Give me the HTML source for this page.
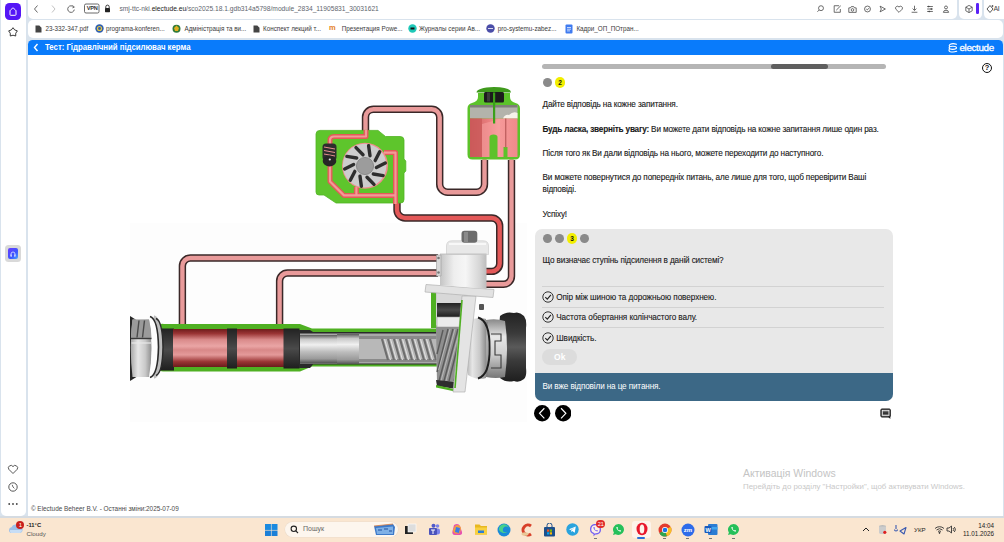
<!DOCTYPE html>
<html><head><meta charset="utf-8">
<style>
*{margin:0;padding:0;box-sizing:border-box}
html,body{width:1004px;height:542px;overflow:hidden;background:#d9e3ed;font-family:"Liberation Sans",sans-serif;position:relative}
.a{position:absolute}
.t{position:absolute;white-space:nowrap;font-family:"Liberation Sans",sans-serif}
</style></head><body>
<!-- sidebar -->
<div class="a" style="left:1px;top:0;width:24.5px;height:516px;background:#fff;border-radius:0 0 5px 5px"></div>
<div class="a" style="left:5px;top:3px;width:16px;height:17px;background:#5516f6;border-radius:4.5px"></div>
<!-- address bar -->
<div class="a" style="left:28px;top:0;width:929px;height:18.5px;background:#fff;border-radius:0 0 5px 5px"></div>
<div class="a" style="left:959px;top:0;width:23px;height:18.5px;background:#fff;border-radius:0 0 5px 5px"></div>
<div class="a" style="left:984px;top:0;width:20px;height:18.5px;background:#fff;border-radius:0 0 0 5px"></div>
<!-- bookmarks -->
<div class="a" style="left:28px;top:20px;width:975px;height:17.5px;background:#fff;border-radius:5px"></div>
<!-- content -->
<div class="a" style="left:28px;top:39.5px;width:975px;height:476.5px;background:#fff;border-radius:5px 5px 0 0"></div>
<div class="a" style="left:28px;top:39.7px;width:975px;height:15.8px;background:#097bfb;border-radius:4.5px 4.5px 0 0"></div>


<!-- chrome: sidebar icons -->
<svg class="a" style="left:5px;top:3px" width="16" height="17" viewBox="0 0 16 17"><path d="M5 11.6 V8 Q5 7.4 5.5 7 L7.4 5.3 Q8 4.8 8.6 5.3 L10.5 7 Q11 7.4 11 8 V11.6 Q11 12.3 10.3 12.3 H5.7 Q5 12.3 5 11.6 Z" fill="none" stroke="#fff" stroke-width="1" stroke-linejoin="round"/></svg>
<svg class="a" style="left:7px;top:26px" width="12" height="12" viewBox="0 0 12 12"><path d="M6.00 1.70 L7.70 3.95 L10.37 4.88 L8.76 7.20 L8.70 10.02 L6.00 9.20 L3.30 10.02 L3.24 7.20 L1.63 4.88 L4.30 3.95 Z" fill="none" stroke="#3a3a3a" stroke-width="1" stroke-linejoin="round"/></svg>
<div class="a" style="left:5px;top:245px;width:16px;height:16.5px;background:#d9d9d9;border-radius:3.5px"></div>
<div class="a" style="left:7.8px;top:247.7px;width:10.5px;height:11px;background:linear-gradient(135deg,#6a3cff,#3b55ff 60%,#4aa8ff);border-radius:2px"></div>
<svg class="a" style="left:8px;top:248.5px" width="10" height="9.5" viewBox="0 0 10 9.5"><path d="M3 7 V5 A2 2 0 0 1 7 5 V7" fill="none" stroke="#cfd8ff" stroke-width="0.9"/><rect x="2.5" y="5.5" width="1.3" height="2.3" fill="#cfd8ff"/><rect x="6.2" y="5.5" width="1.3" height="2.3" fill="#cfd8ff"/></svg>
<svg class="a" style="left:7px;top:464px" width="12" height="11" viewBox="0 0 12 11"><path d="M6 9.5 L1.8 5.3 A2.3 2.3 0 0 1 6 2.6 A2.3 2.3 0 0 1 10.2 5.3 Z" fill="none" stroke="#444" stroke-width="0.9" stroke-linejoin="round"/></svg>
<svg class="a" style="left:7px;top:481px" width="12" height="12" viewBox="0 0 12 12"><circle cx="6" cy="6" r="4.2" fill="none" stroke="#444" stroke-width="0.9"/><path d="M5.2 3.8 L6 6 L7.4 7.4" fill="none" stroke="#444" stroke-width="0.8"/></svg>
<svg class="a" style="left:7px;top:502px" width="12" height="4" viewBox="0 0 12 4"><circle cx="2.2" cy="2" r="0.9" fill="#444"/><circle cx="6" cy="2" r="0.9" fill="#444"/><circle cx="9.8" cy="2" r="0.9" fill="#444"/></svg>
<!-- chrome: nav -->
<svg class="a" style="left:30px;top:3px" width="80" height="12" viewBox="0 0 80 12"><path d="M7.5 2.5 L4.5 6 L7.5 9.5" fill="none" stroke="#555" stroke-width="0.9"/><path d="M22 2.5 L25 6 L22 9.5" fill="none" stroke="#bbb" stroke-width="0.9"/><path d="M43.6 4 A3.3 3.3 0 1 0 44.3 6.6" fill="none" stroke="#555" stroke-width="0.9"/><path d="M42.6 2.4 L44.4 4.2 L42.4 4.9" fill="none" stroke="#555" stroke-width="0.8"/><rect x="54.5" y="1" width="14.5" height="9" rx="1.5" fill="none" stroke="#444" stroke-width="0.8"/></svg>
<div class="t" style="left:85px;top:4.8px;width:14.5px;text-align:center;font-size:5.6px;font-weight:bold;line-height:6px;color:#333;letter-spacing:-0.2px">VPN</div>
<svg class="a" style="left:104px;top:4px" width="7" height="9" viewBox="0 0 7 9"><path d="M1.8 4 V2.8 A1.7 1.7 0 0 1 5.2 2.8 V4" fill="none" stroke="#222" stroke-width="0.9"/><rect x="1" y="4" width="5" height="4.2" rx="0.6" fill="#222"/></svg>
<div class="t" style="left:119.5px;top:4.5px;font-size:6.67px;line-height:8px;color:#60656d">smj-ttc-nki.<span style="color:#222">electude.eu</span>/sco2025.18.1.gdb314a5798/module_2834_11905831_30031621</div>

<!-- chrome: right icons -->
<svg class="a" style="left:812px;top:1.5px" width="140" height="14" viewBox="0 0 140 14" fill="none" stroke="#444" stroke-width="0.95"><g transform="translate(9 7) scale(0.82) translate(-9 -7)"><circle cx="9" cy="6" r="3"/><path d="M6.8 8.2 L4.6 10.4"/></g><g transform="translate(25.3 7) scale(0.82) translate(-25.3 -7)"><path d="M27.5 3 H21.5 V11 H29 V7"/><path d="M24 8.5 L29.5 3"/></g><g transform="translate(40.5 7.5) scale(0.82) translate(-40.5 -7.5)"><path d="M36 11 V5.5 H38 L39 4 H42 L43 5.5 H45 V11 Z"/><circle cx="40.5" cy="8" r="1.6"/></g><g transform="translate(55.5 7) scale(0.82) translate(-55.5 -7)"><circle cx="55.5" cy="7" r="3.6"/><path d="M54 7 L55.2 8.2 L57.2 6"/></g><g transform="translate(70.7 7) scale(0.82) translate(-70.7 -7)"><path d="M67.5 3.5 L74 7 L67.5 10.5 L69 7 Z" stroke-linejoin="round"/></g><g transform="translate(87 7.5) scale(0.82) translate(-87 -7.5)"><path d="M87 11 L83.2 7.2 A2.2 2.2 0 0 1 87 4.5 A2.2 2.2 0 0 1 90.8 7.2 Z" stroke-linejoin="round"/></g><g transform="translate(102.5 7) scale(0.82) translate(-102.5 -7)"><path d="M102.5 3 V8.5 M100.2 6.5 L102.5 8.8 L104.8 6.5 M99 11 H106"/></g><g transform="translate(118 7) scale(0.82) translate(-118 -7)"><path d="M114.5 4 H121.5 M114.5 7 H121.5 M114.5 10 H121.5"/><circle cx="116.5" cy="4" r="0.6" fill="#444"/><circle cx="119.5" cy="7" r="0.6" fill="#444"/><circle cx="117" cy="10" r="0.6" fill="#444"/></g><g transform="translate(134 7.5) scale(0.82) translate(-134 -7.5)"><circle cx="134" cy="5" r="1.8"/><path d="M130.8 11 A3.2 2.6 0 0 1 137.2 11 Z"/></g></svg>
<svg class="a" style="left:962.5px;top:3px" width="12" height="12" viewBox="0 0 12 12" fill="none" stroke="#444" stroke-width="0.95"><g transform="translate(6 6) scale(0.8) translate(-6 -6)"><path d="M6 1.5 L10 3.7 V8.3 L6 10.5 L2 8.3 V3.7 Z M2 3.7 L6 6 L10 3.7 M6 6 V10.5" stroke-linejoin="round"/></g></svg>
<div class="a" style="left:976.3px;top:3px;width:2.5px;height:11px;background:#5a22f6;border-radius:1.2px"></div>
<svg class="a" style="left:985px;top:3px" width="10" height="12" viewBox="0 0 10 12" fill="none" stroke="#444" stroke-width="0.9"><path d="M5 2.5 L8 6 L5 9.5 L2 6 Z" stroke-linejoin="round"/><path d="M7.5 2 V4 M6.5 3 H8.5" stroke-width="0.7"/></svg>
<div class="t" style="left:993.5px;top:4.5px;font-size:7px;line-height:8px;color:#444;letter-spacing:-0.3px">AI</div>
<!-- bookmarks -->
<div class="a" style="left:28px;top:24px;font-size:6.3px;line-height:8px;color:#3a3a3a;white-space:nowrap">
 <svg class="a" style="left:6.5px;top:0.5px" width="7" height="8" viewBox="0 0 7 8"><path d="M0.5 0.5 H4.3 L6.5 2.7 V7.5 H0.5 Z" fill="#444"/></svg>
 <div class="a" style="left:17.5px;top:1px">23-332-347.pdf</div>
 <svg class="a" style="left:66.5px;top:0px" width="9" height="9" viewBox="0 0 9 9"><circle cx="4.5" cy="4.5" r="4.2" fill="#2f5fb0"/><circle cx="4.5" cy="4.5" r="2.6" fill="#e8c840"/><circle cx="4.5" cy="4.5" r="1.4" fill="#2f5fb0"/></svg>
 <div class="a" style="left:78px;top:1px">programa-konferen...</div>
 <svg class="a" style="left:144px;top:0px" width="9" height="9" viewBox="0 0 9 9"><circle cx="4.5" cy="4.8" r="4" fill="#2f7a3a"/><path d="M2 4 L4.5 1.5 L7 4 L6 7 H3 Z" fill="#e0b020"/></svg>
 <div class="a" style="left:156.5px;top:1px">Адміністрація та ви...</div>
 <svg class="a" style="left:224.5px;top:0.5px" width="7" height="8" viewBox="0 0 7 8"><path d="M0.5 0.5 H4.3 L6.5 2.7 V7.5 H0.5 Z" fill="#444"/></svg>
 <div class="a" style="left:235px;top:1px">Конспект лекций т...</div>
 <div class="a" style="left:301px;top:-0.5px;font-size:7.5px;font-weight:bold;color:#e3801e;letter-spacing:-0.6px">m</div>
 <div class="a" style="left:313.7px;top:1px">Презентация Powe...</div>
 <svg class="a" style="left:380px;top:0px" width="9" height="9" viewBox="0 0 9 9"><circle cx="4.5" cy="4.5" r="4.2" fill="#1ec8b8"/><rect x="2.5" y="3.5" width="4" height="2" fill="#111"/></svg>
 <div class="a" style="left:391px;top:1px">Журналы серии Ав...</div>
 <svg class="a" style="left:458px;top:0px" width="9" height="9" viewBox="0 0 9 9"><circle cx="4.5" cy="4.5" r="4.2" fill="#4b4ea8"/><path d="M2 4.5 H7" stroke="#fff" stroke-width="0.8"/></svg>
 <div class="a" style="left:469.7px;top:1px">pro-systemu-zabez...</div>
 <svg class="a" style="left:537px;top:-0.5px" width="8" height="10" viewBox="0 0 8 10"><rect x="0.5" y="0.5" width="7" height="9" rx="1" fill="#3f7bf0"/><path d="M2 3.5 H6 M2 5.2 H6 M2 6.9 H5" stroke="#fff" stroke-width="0.7"/></svg>
 <div class="a" style="left:548.4px;top:1px">Кадри_ОП_ПОтран...</div>
</div>
<!-- header -->
<svg class="a" style="left:33px;top:43px" width="6" height="9" viewBox="0 0 6 9"><path d="M4.5 1 L1.5 4.5 L4.5 8" fill="none" stroke="#fff" stroke-width="1.4"/></svg>
<div class="t" style="left:44.8px;top:42.3px;font-size:8.5px;font-weight:bold;color:#fff;line-height:10px;transform:scaleX(0.925);transform-origin:0 0;letter-spacing:-0.05px">Тест: Гідравлічний підсилювач керма</div>
<div class="t" style="left:959.5px;top:42px;font-size:9.8px;color:#fff;line-height:11px;letter-spacing:-0.35px;-webkit-text-stroke:0.3px #fff">electude</div>
<svg class="a" style="left:947px;top:42px" width="12" height="12" viewBox="947 42 12 12" fill="none" stroke="#fff" stroke-width="1.1" stroke-linecap="round"><path d="M956.5 44.3 Q953 43 950.3 44.2 Q948.6 45.2 949.6 46.6"/><ellipse cx="952.8" cy="47.8" rx="3.7" ry="1.6"/><path d="M949.3 49.4 Q948.3 51 950.3 51.7 Q953.3 52.6 956.7 51.3"/></svg>
<!-- illus --><svg class="a" style="left:125px;top:56px" width="410" height="370" viewBox="125 56 410 370">
<defs>
 <linearGradient id="gRed" x1="0" y1="0" x2="0" y2="1">
  <stop offset="0" stop-color="#6e1c1c"/><stop offset="0.12" stop-color="#9a3434"/><stop offset="0.28" stop-color="#d98a8a"/><stop offset="0.45" stop-color="#eaa5a5"/><stop offset="0.55" stop-color="#d88888"/><stop offset="0.68" stop-color="#e49a9a"/><stop offset="0.86" stop-color="#9a3434"/><stop offset="1" stop-color="#6a1c1c"/>
 </linearGradient>
 <linearGradient id="gRod" x1="0" y1="0" x2="0" y2="1">
  <stop offset="0" stop-color="#5a5a5a"/><stop offset="0.15" stop-color="#c8c8c8"/><stop offset="0.35" stop-color="#f0f0f0"/><stop offset="0.6" stop-color="#bdbdbd"/><stop offset="0.85" stop-color="#9a9a9a"/><stop offset="1" stop-color="#555"/>
 </linearGradient>
 <linearGradient id="gDark" x1="0" y1="0" x2="0" y2="1">
  <stop offset="0" stop-color="#222"/><stop offset="0.5" stop-color="#4a4a4a"/><stop offset="1" stop-color="#1e1e1e"/>
 </linearGradient>
 <linearGradient id="gMetal" x1="0" y1="0" x2="1" y2="0">
  <stop offset="0" stop-color="#a8a8a8"/><stop offset="0.35" stop-color="#e6e6e6"/><stop offset="0.7" stop-color="#c9c9c9"/><stop offset="1" stop-color="#8e8e8e"/>
 </linearGradient>
 <linearGradient id="gMetalV" x1="0" y1="0" x2="0" y2="1">
  <stop offset="0" stop-color="#888"/><stop offset="0.3" stop-color="#e8e8e8"/><stop offset="0.6" stop-color="#cfcfcf"/><stop offset="1" stop-color="#777"/>
 </linearGradient>
 <linearGradient id="gBoot" x1="0" y1="0" x2="0" y2="1">
  <stop offset="0" stop-color="#222"/><stop offset="0.3" stop-color="#3a3a3a"/><stop offset="0.5" stop-color="#5a5a5a"/><stop offset="0.7" stop-color="#3a3a3a"/><stop offset="1" stop-color="#1e1e1e"/>
 </linearGradient>
 <linearGradient id="gRes" x1="0" y1="0" x2="1" y2="0">
  <stop offset="0" stop-color="#cf5f5f"/><stop offset="0.4" stop-color="#e97f7f"/><stop offset="0.6" stop-color="#f69a9a"/><stop offset="1" stop-color="#f08a8a"/>
 </linearGradient>
</defs>
<!-- image bg -->
<rect x="130" y="223" width="397" height="199" fill="#fdfdfd"/>
<!-- pipes: outline -->
<g fill="none" stroke-linejoin="round" stroke-linecap="butt">
 <g stroke="#3a2828" stroke-width="7.4">
  <path d="M365.5 131 V117 A8 8 0 0 1 373.5 109.2 H431.7 A8 8 0 0 1 439.7 117.2 V184.2 A8 8 0 0 0 447.7 192.2 H476.5 A8 8 0 0 0 484.5 184.2 V160"/>
  <path d="M511.5 160 V276.3 A8 8 0 0 1 503.5 284.3 H486"/>
  <path d="M397 200 V210 A8 8 0 0 0 405 218 H491.7 A8 8 0 0 1 499.7 226 V263.4 A8 8 0 0 1 491.7 271.4 H484"/>
  <path d="M438 258 H190.4 A8 8 0 0 0 182.4 266 V328"/>
  <path d="M438 273 H287.6 A8 8 0 0 0 279.6 281 V327"/>
 </g>
 <g stroke="#e99a9a" stroke-width="4.4">
  <path d="M365.5 131 V117 A8 8 0 0 1 373.5 109.2 H431.7 A8 8 0 0 1 439.7 117.2 V184.2 A8 8 0 0 0 447.7 192.2 H476.5 A8 8 0 0 0 484.5 184.2 V158"/>
  <path d="M511.5 158 V276.3 A8 8 0 0 1 503.5 284.3 H484"/>
  <path d="M438 258 H190.4 A8 8 0 0 0 182.4 266 V329"/>
  <path d="M438 273 H287.6 A8 8 0 0 0 279.6 281 V329"/>
 </g>
 <path stroke="#e35858" stroke-width="4.4" d="M397 198 V210 A8 8 0 0 0 405 218 H491.7 A8 8 0 0 1 499.7 226 V263.4 A8 8 0 0 1 491.7 271.4 H482"/>
</g>
<!-- pump -->
<path d="M316 134 Q316 130.4 320 130.4 H378 L385.5 136.5 H400 Q404 136.5 404 140 V159 L405.8 161 V171 L404 173 V199.5 Q404 203 400.5 203 H336 L324 195 H319 Q316 195 316 192 Z" fill="#5ec52c" stroke="#52b424" stroke-width="0.8"/>
<g fill="none" stroke-linejoin="round">
 <g stroke="#e35a58" stroke-width="5">
 <path d="M366 130 V136.5 H334 Q330 136.5 330 140.5 V150"/>
 <path d="M330 164 V181.5 L344 195.4 H395.5"/>
 <path d="M384 152.6 H395.5 V204"/>
 <path d="M356.4 195.4 V187"/>
 </g>
 <g stroke="#f39a98" stroke-width="2.2">
 <path d="M366 130 V136.5 H334 Q330 136.5 330 140.5 V150"/>
 <path d="M330 164 V181.5 L344 195.4 H395.5"/>
 <path d="M384 152.6 H395.5 V204"/>
 <path d="M356.4 195.4 V187"/>
 </g>
</g>
<!-- spring -->
<rect x="322.5" y="143.4" width="14" height="17" rx="3.5" fill="#2e2e2e"/>
<path d="M324 147 L335 149 M324 150.5 L335 152.5 M324 154 L335 156" stroke="#e89090" stroke-width="1"/>
<ellipse cx="329.5" cy="161" rx="6.8" ry="5.4" fill="#262626"/>
<circle cx="329.8" cy="159.5" r="1.1" fill="#ddd"/>
<!-- rotor -->
<circle cx="365" cy="165.8" r="23" fill="#f08c8c"/>
<circle cx="364.6" cy="165.6" r="21.8" fill="#cdcdcd"/>
<g stroke="#2e2e2e" stroke-width="3.4" stroke-linecap="round"><path d="M370.0 155.7 L368.6 145.8"/><path d="M375.2 160.6 L379.7 151.8"/><path d="M376.4 167.6 L385.3 163.1"/><path d="M373.3 174.0 L383.1 175.6"/><path d="M367.0 177.3 L374.0 184.4"/><path d="M360.0 176.3 L361.4 186.2"/><path d="M354.8 171.4 L350.3 180.2"/><path d="M353.6 164.4 L344.7 168.9"/><path d="M356.7 158.0 L346.9 156.4"/><path d="M363.0 154.7 L356.0 147.6"/></g>
<circle cx="365" cy="166" r="8.6" fill="#9c9c9c" stroke="#7a7a7a" stroke-width="0.7"/>
<!-- reservoir -->
<path d="M478 93 V97 Q478 101.5 472 103 Q467.5 104 467.5 108.5 V154.5 Q467.5 159.5 472.5 159.5 H515 Q520 159.5 520 154.5 V108.5 Q520 104 515.5 103 Q510 101.5 510 97 V93 Z" fill="#5cc22a"/>
<path d="M476.5 92.5 Q477 87.5 494 87 Q511 87.5 511 92.5 Z" fill="#3f9a1c"/>
<rect x="484" y="92" width="20" height="10.5" rx="1.5" fill="#1c1c1c"/>
<rect x="487" y="92.5" width="3" height="9" fill="#3a3a3a"/>
<rect x="470" y="105" width="47.5" height="13.5" fill="#b3b3ab"/>
<rect x="470" y="105" width="47.5" height="2.5" fill="#7e7e78"/>
<path d="M503 118.5 Q505 114 509 115 Q513 111 517.5 113 V118.5 Z" fill="#f6f2ea"/>
<rect x="470" y="118.5" width="47.5" height="38.5" fill="url(#gRes)"/>
<path d="M470 118.5 H482 V157 H470 Z" fill="#c95858" opacity="0.75"/>
<path d="M482 124 L500 119 V157 H482 Z" fill="#f7a2a2" opacity="0.55"/>
<path d="M489.5 157 V137 Q489.5 134.5 493.5 134.5 Q497.5 134.5 497.5 137 V157 Z" fill="#5cc22a"/>
<path d="M503.5 157 V147 H507.5 V157 Z" fill="#5cc22a"/>
<rect x="493" y="92.5" width="2.2" height="31" fill="#3aa01a"/>
<rect x="505" y="118.5" width="1.4" height="29" fill="#c26262"/>
<!-- cylinder / rack tube -->
<path d="M158 326 Q160 323 164 324 H300 L312 328.5 H437 V366.5 H312 L300 371.5 H164 Q160 372 158 369 Z" fill="#4fb022"/>
<rect x="160" y="328.5" width="14" height="42" fill="url(#gDark)"/>
<rect x="173" y="329" width="111" height="38" fill="url(#gRed)"/>
<rect x="227" y="328.5" width="10" height="40" fill="url(#gDark)"/>
<rect x="283.5" y="328.5" width="16" height="40" fill="url(#gDark)"/>
<path d="M299 330 H310 L313 332 H437 V364.5 H313 L310 368 H299 Z" fill="#2a2a2a"/>
<rect x="300" y="333.5" width="137" height="30" fill="#a9a9a9"/>
<rect x="300" y="335" width="37" height="28" fill="url(#gRod)"/>
<rect x="337" y="334" width="22" height="30" fill="url(#gRod)"/>
<rect x="359" y="336" width="78" height="26" fill="#b8b8b8"/>
<rect x="359" y="336" width="78" height="3" fill="#8a8a8a"/>
<rect x="359" y="359" width="78" height="3" fill="#8a8a8a"/>
<g stroke="#6e6e6e" stroke-width="2.2">
 <path d="M382 339 L388 360"/><path d="M388 339 L394 360"/><path d="M394 339 L400 360"/><path d="M400 339 L406 360"/><path d="M406 339 L412 360"/><path d="M412 339 L418 360"/><path d="M418 339 L424 360"/><path d="M424 339 L430 360"/><path d="M430 339 L436 360"/>
</g>
<g stroke="#e2e2e2" stroke-width="1">
 <path d="M384.5 339 L390.5 360"/><path d="M390.5 339 L396.5 360"/><path d="M396.5 339 L402.5 360"/><path d="M402.5 339 L408.5 360"/><path d="M408.5 339 L414.5 360"/><path d="M414.5 339 L420.5 360"/><path d="M420.5 339 L426.5 360"/><path d="M426.5 339 L432.5 360"/>
</g>
<!-- left boot -->
<path d="M130 316 L138 321 V376 L130 381 Z" fill="#262626"/>
<path d="M132.5 319.5 H149 Q154 348 149 377 H132.5 Q129 348 132.5 319.5 Z" fill="url(#gMetal)"/>
<path d="M132.5 319.5 H149 Q151.5 329 151.5 338.5 H131 Q131 329 132.5 319.5 Z" fill="#9a9a9a"/>
<path d="M139 320.5 L137 337.5 M144.5 320.5 L142.5 337.5" stroke="#4a4a4a" stroke-width="1.4"/>
<path d="M131 338.5 H151.5" stroke="#3a3a3a" stroke-width="1.4"/>
<path d="M131.5 343 H151" stroke="#e8e8e8" stroke-width="1.2"/>
<path d="M153.5 317.5 Q160 320 160.5 347 Q160 374 153.5 376.5" fill="none" stroke="#bdbdbd" stroke-width="5"/>
<path d="M150 316.5 Q158 319 158.5 347 Q158 375 150 377.5" fill="none" stroke="#2a2a2a" stroke-width="1.6"/>
<path d="M156 318.5 Q162.5 321 163 347 Q162.5 373 156 375.5" fill="none" stroke="#2a2a2a" stroke-width="1.4"/>
<!-- right boot -->
<path d="M500 316 Q506 311 514 313 Q519 311 524 316 Q527 320 526 328 V368 Q527 376 524 379 Q519 383 514 381 Q506 383 500 378 Q496 347 500 316 Z" fill="url(#gBoot)"/>
<path d="M486 320 Q496 318 505 321 Q509 348 505 377 Q496 379 486 377 Z" fill="url(#gMetalV)"/>
<path d="M491 334 H501 V341 H495 V355 H501 V368 H491" fill="none" stroke="#3a3a3a" stroke-width="1.1"/>
<path d="M487 322 V376" stroke="#7a7a7a" stroke-width="1"/>
<path d="M468 321 Q478 316 486 319 V378 Q478 381 468 375 Q462 348 468 321 Z" fill="url(#gMetal)"/>
<path d="M478 317.5 Q490 321 489.5 348 Q490 375 478 378.5" fill="none" stroke="#1e1e1e" stroke-width="2"/>
<rect x="479" y="304" width="5" height="6" rx="1" fill="#555"/>
<!-- valve + pinion -->
<path d="M431 289 H436 V325 L440 328 H431 Z" fill="#4fb022"/>
<path d="M436 291 H468 L461 386 H437 Z" fill="#c9c9c9"/>
<rect x="437" y="291" width="27" height="12" fill="#d8d8d8"/>
<rect x="437" y="303" width="26" height="14" fill="url(#gDark)"/>
<path d="M437 317 H464 V327 H437 Z" fill="#ececec" stroke="#a0a0a0" stroke-width="0.6"/>
<path d="M436 327 H462 L457 381 H437 Z" fill="#8f8f8f"/>
<g stroke="#5a5a5a" stroke-width="1.4">
 <path d="M439 381 L453 329"/><path d="M444 381 L458 329"/><path d="M449 381 L461 333"/><path d="M437 372 L448 329"/><path d="M437 354 L443 330"/><path d="M454 381 L461 352"/>
</g>
<g stroke="#c8c8c8" stroke-width="0.7">
 <path d="M441 381 L455 329"/><path d="M446 381 L460 329"/><path d="M438.5 370 L450 329"/>
</g>
<path d="M436 380 L457 382 L456 389 L437 386 Z" fill="#2e2e2e"/>
<path d="M436 385 L456 389.5 L455 391.5 L436 387.5 Z" fill="#4fb022"/>
<path d="M462 296 L476 296 L465 392 L453 392 Z" fill="#e4e4e4" stroke="#a8a8a8" stroke-width="0.6"/>
<path d="M462 300 L455 388" stroke="#4fb022" stroke-width="1.6"/>
<!-- valve housing -->
<linearGradient id="gVal" x1="0" y1="0" x2="1" y2="0"><stop offset="0" stop-color="#c4c4c4"/><stop offset="0.3" stop-color="#eeeeee"/><stop offset="0.55" stop-color="#f6f6f6"/><stop offset="0.85" stop-color="#d6d6d6"/><stop offset="1" stop-color="#bcbcbc"/></linearGradient>
<path d="M426 284.5 L494 289.5 L493 297.5 L425 292 Z" fill="#e2e2e2" stroke="#b0b0b0" stroke-width="0.7"/>
<path d="M440 254 H486.5 V289 L440 285 Z" fill="url(#gVal)"/>
<path d="M436.5 255 H441 V276 H436.5 Z" fill="#d8d8d8" stroke="#9a9a9a" stroke-width="0.6"/>
<circle cx="438.5" cy="258" r="1.3" fill="#777"/><circle cx="438.5" cy="272.5" r="1.3" fill="#777"/>
<path d="M446.5 254.5 V246 Q446.5 240.8 452 240.8 H483 Q488.5 240.8 488.5 246 V254.5 Z" fill="#e8e8e8" stroke="#c8c8c8" stroke-width="0.6"/>
<path d="M449 244 H486" stroke="#f8f8f8" stroke-width="2"/>
<path d="M440 254 H486.5" stroke="#b8b8b8" stroke-width="0.8"/>
<rect x="461.5" y="230.8" width="15.8" height="12" rx="3" fill="#6c6c6c"/>
<rect x="464" y="232" width="4" height="10" fill="#8a8a8a"/>
</svg>
<!-- /illus -->
<!-- progress -->
<div class="a" style="left:542px;top:64px;width:344px;height:5px;background:#b5b5b5;border-radius:3px"></div>
<div class="a" style="left:771px;top:64px;width:57px;height:5px;background:#5f5f5f;border-radius:3px"></div>
<div class="a" style="left:543px;top:78px;width:9px;height:9px;background:#8a8a8a;border-radius:50%"></div>
<div class="a" style="left:554.7px;top:77px;width:10.6px;height:10.6px;background:#f2ee00;border-radius:50%"></div>
<div class="t" style="left:554.7px;top:79px;width:10.6px;text-align:center;font-size:6.5px;font-weight:bold;line-height:7px;color:#111">2</div>
<!-- help icon -->
<div class="a" style="left:981.7px;top:62.5px;width:10.6px;height:10.6px;border:1.5px solid #111;border-radius:50%"></div>
<div class="t" style="left:981.7px;top:64.2px;width:10.6px;text-align:center;font-size:7.5px;font-weight:bold;line-height:8px;color:#111">?</div>
<!-- instructions -->
<div class="a" style="left:542.5px;top:99px;font-size:8.2px;line-height:12.3px;color:#1a1a1a;letter-spacing:-0.14px;white-space:nowrap;-webkit-text-stroke:0.12px #1a1a1a">
<div style="position:absolute;top:0">Дайте відповідь на кожне запитання.</div>
<div style="position:absolute;top:24.5px"><b style="letter-spacing:-0.2px">Будь ласка, зверніть увагу:</b> Ви можете дати відповідь на кожне запитання лише один раз.</div>
<div style="position:absolute;top:49px">Після того як Ви дали відповідь на нього, можете переходити до наступного.</div>
<div style="position:absolute;top:73px">Ви можете повернутися до попередніх питань, але лише для того, щоб перевірити Ваші<br>відповіді.</div>
<div style="position:absolute;top:110px">Успіху!</div>
</div>
<!-- quiz box -->
<div class="a" style="left:534.7px;top:228.6px;width:358.3px;height:172.4px;background:#e8e8e8;border-radius:7px;overflow:hidden">
 <div class="a" style="left:0;top:144.4px;width:100%;height:28px;background:#3c6886"></div>

 <div class="a" style="left:8.3px;top:5.5px;width:8.9px;height:8.9px;background:#8a8a8a;border-radius:50%"></div>
 <div class="a" style="left:20.3px;top:5.5px;width:8.9px;height:8.9px;background:#8a8a8a;border-radius:50%"></div>
 <div class="a" style="left:32.1px;top:4.6px;width:10.6px;height:10.6px;background:#f2ee00;border-radius:50%"></div>
 <div class="t" style="left:32.1px;top:6.5px;width:10.6px;text-align:center;font-size:6.5px;font-weight:bold;line-height:7px;color:#111">3</div>
 <div class="a" style="left:45.1px;top:5.5px;width:8.9px;height:8.9px;background:#8a8a8a;border-radius:50%"></div>
 <div class="t" style="left:7.8px;top:27px;font-size:8.2px;line-height:10px;color:#1a1a1a;letter-spacing:-0.14px;-webkit-text-stroke:0.1px #1a1a1a">Що визначає ступінь підсилення в даній системі?</div>
 <div class="a" style="left:7.5px;top:57.2px;width:342px;height:1px;background:#d2d2d2"></div>
 <div class="a" style="left:7.5px;top:78.7px;width:342px;height:1px;background:#d2d2d2"></div>
 <div class="a" style="left:7.5px;top:98.6px;width:342px;height:1px;background:#d2d2d2"></div>
 <svg class="a" style="left:7px;top:62.4px" width="12" height="12" viewBox="0 0 12 12"><circle cx="6" cy="6" r="5.2" fill="none" stroke="#333" stroke-width="1"/><path d="M3.3 6.2 L5.3 8.2 L8.9 3.8" fill="none" stroke="#222" stroke-width="1.1"/></svg>
 <svg class="a" style="left:7px;top:82.8px" width="12" height="12" viewBox="0 0 12 12"><circle cx="6" cy="6" r="5.2" fill="none" stroke="#333" stroke-width="1"/><path d="M3.3 6.2 L5.3 8.2 L8.9 3.8" fill="none" stroke="#222" stroke-width="1.1"/></svg>
 <svg class="a" style="left:7px;top:103.6px" width="12" height="12" viewBox="0 0 12 12"><circle cx="6" cy="6" r="5.2" fill="none" stroke="#333" stroke-width="1"/><path d="M3.3 6.2 L5.3 8.2 L8.9 3.8" fill="none" stroke="#222" stroke-width="1.1"/></svg>
 <div class="t" style="left:21.5px;top:64px;font-size:8.2px;line-height:10px;color:#1a1a1a;letter-spacing:-0.08px;-webkit-text-stroke:0.1px #1a1a1a">Опір між шиною та дорожньою поверхнею.</div>
 <div class="t" style="left:21.5px;top:84.3px;font-size:8.2px;line-height:10px;color:#1a1a1a;letter-spacing:-0.08px;-webkit-text-stroke:0.1px #1a1a1a">Частота обертання колінчастого валу.</div>
 <div class="t" style="left:21.5px;top:105px;font-size:8.2px;line-height:10px;color:#1a1a1a;letter-spacing:-0.08px;-webkit-text-stroke:0.1px #1a1a1a">Швидкість.</div>
 <div class="a" style="left:7.5px;top:120px;width:35px;height:16px;background:#dcdcdc;border-radius:8px"></div>
 <div class="t" style="left:7.5px;top:123.5px;width:35px;text-align:center;font-size:8.5px;font-weight:bold;line-height:10px;color:#fff">Ok</div>
 <div class="t" style="left:7.8px;top:153.5px;font-size:8.2px;line-height:10px;color:#fff;letter-spacing:-0.14px">Ви вже відповіли на це питання.</div>
</div>

<!-- nav -->
<svg class="a" style="left:534.4px;top:405.2px" width="16.4" height="16.4" viewBox="0 0 16 16"><circle cx="8" cy="8" r="8" fill="#000"/><path d="M10.1 3.2 L5.4 8.1 L10.1 13" fill="none" stroke="#fff" stroke-width="1.15"/></svg>
<svg class="a" style="left:554.8px;top:405.2px" width="16.4" height="16.4" viewBox="0 0 16 16"><circle cx="8" cy="8" r="8" fill="#000"/><path d="M5.9 3.2 L10.6 8.1 L5.9 13" fill="none" stroke="#fff" stroke-width="1.15"/></svg>
<svg class="a" style="left:879.5px;top:407.5px" width="11" height="12" viewBox="0 0 11 12"><rect x="0.9" y="1" width="9.4" height="8" rx="1" fill="#6a6a6a" stroke="#151515" stroke-width="1"/><rect x="2.3" y="2.5" width="6.6" height="5" fill="none" stroke="#f4f4f4" stroke-width="0.7"/><rect x="3" y="4.2" width="5.2" height="1.8" fill="#333"/><path d="M8 8.5 L10.3 11 V8.5 Z" fill="#151515"/></svg>

<!-- footer -->
<div class="t" style="left:30.9px;top:505px;font-size:6.4px;line-height:8px;color:#4a4a4a">© Electude Beheer B.V. - Останні зміни:2025-07-09</div>
<div class="t" style="left:743px;top:468px;font-size:10.45px;line-height:12px;color:#c4c4c4">Активація Windows</div>
<div class="t" style="left:743px;top:482px;font-size:7.87px;line-height:9px;color:#c8c8c8">Перейдіть до розділу "Настройки", щоб активувати Windows.</div>
<!-- taskbar -->
<div class="a" style="left:0;top:516px;width:1004px;height:1.5px;background:#d5dbe1"></div>
<div class="a" style="left:0;top:517.5px;width:1004px;height:25px;background:#fae6d0"></div>

<!-- weather -->
<svg class="a" style="left:8px;top:521px" width="16" height="14" viewBox="0 0 16 14"><path d="M3 12 A3 3 0 0 1 3.5 6.2 A4.5 4.5 0 0 1 11.5 5.5 A3.3 3.3 0 0 1 12 12 Z" fill="#9cc0ea"/><path d="M3 12 H12 A3.3 3.3 0 0 0 14 9 H2 A3 3 0 0 0 3 12Z" fill="#c7ddf5"/></svg>
<div class="a" style="left:16.3px;top:520.5px;width:8px;height:8px;background:#c8201c;border-radius:50%"></div>
<div class="t" style="left:16.3px;top:521.5px;width:8px;text-align:center;font-size:6px;line-height:6px;color:#fff">1</div>
<div class="t" style="left:26.5px;top:522px;font-size:5.8px;font-weight:bold;line-height:7px;color:#222">-11°C</div>
<div class="t" style="left:26.5px;top:530px;font-size:6.2px;line-height:7px;color:#555">Cloudy</div>
<!-- taskbar center -->
<svg class="a" style="left:265px;top:523.5px" width="12.5" height="12.5" viewBox="0 0 12 12"><rect x="0" y="0" width="5.7" height="5.7" fill="#1a8ae0"/><rect x="6.3" y="0" width="5.7" height="5.7" fill="#1a8ae0"/><rect x="0" y="6.3" width="5.7" height="5.7" fill="#1a7fd8"/><rect x="6.3" y="6.3" width="5.7" height="5.7" fill="#1a7fd8"/></svg>
<div class="a" style="left:284.5px;top:522px;width:113.5px;height:15px;background:#fdf6ee;border-radius:7.5px;box-shadow:0 0 0 0.5px #ecdccb"></div>
<svg class="a" style="left:290px;top:525px" width="9" height="9" viewBox="0 0 9 9" fill="none" stroke="#222" stroke-width="1.1"><circle cx="3.8" cy="3.8" r="2.7"/><path d="M5.8 5.8 L8 8"/></svg>
<div class="t" style="left:303px;top:525px;font-size:7px;line-height:8px;color:#666">Пошук</div>
<svg class="a" style="left:372.5px;top:523px" width="23" height="13" viewBox="0 0 23 13"><path d="M1 3 L20 1 L22 4 L21 12 L3 12 Z" fill="#3d79c9"/><path d="M3 5 L20 3.5 V11 H4 Z" fill="#7fb0e6"/><path d="M5 7 H9 M11 6 H15 M16 8 H19" stroke="#2050a0" stroke-width="1"/><path d="M1 3 L20 1" stroke="#e08040" stroke-width="0.8"/></svg>
<svg class="a" style="left:404px;top:523px" width="13" height="13" viewBox="0 0 13 13"><rect x="1" y="3" width="8" height="8" fill="#222"/><rect x="4" y="1" width="8" height="8" fill="#ddd" stroke="#fff" stroke-width="0.6"/></svg>
<svg class="a" style="left:428px;top:523px" width="13" height="13" viewBox="0 0 13 13"><circle cx="9.5" cy="3" r="1.8" fill="#7b83eb"/><circle cx="5.5" cy="2.8" r="2" fill="#5059c9"/><rect x="7" y="5.5" width="5" height="6" rx="2" fill="#7b83eb"/><rect x="1" y="5" width="8" height="7" rx="1" fill="#4b53bc"/><path d="M3 7 H7 M5 7 V11" stroke="#fff" stroke-width="1"/></svg>
<svg class="a" style="left:451px;top:523px" width="13" height="13" viewBox="0 0 13 13"><path d="M3 2 C6 0 8 1 9 3 L11 9 C11.5 11 10 12.5 8 12 L4 12 C1.5 12 1 10 1.5 8 Z" fill="#e84fb0"/><path d="M4 3 C6 1 9 2 10 5 L9 10 C5 12 2 10 2 7 Z" fill="#f0a040"/><path d="M5 4 L9 5 L8 10 L4 9 Z" fill="#3a7be8"/></svg>
<svg class="a" style="left:474px;top:523px" width="14" height="13" viewBox="0 0 14 13"><path d="M1 1.5 H5.5 L7 3 H13 V11.5 H1 Z" fill="#e8b820"/><rect x="1" y="4.5" width="12" height="7" fill="#f8d040"/><rect x="4" y="7.5" width="6" height="2.5" fill="#2d7fd6"/></svg>
<svg class="a" style="left:496.5px;top:522.5px" width="14" height="14" viewBox="0 0 14 14"><circle cx="7" cy="7" r="6.5" fill="#1a8ad8"/><path d="M2 7 A5 5 0 0 1 12 5.5 C11 3 8 3 6.5 5 C5 7 7 9.5 10 9 A5.5 5.5 0 0 1 2 7" fill="#48d18c"/><circle cx="8" cy="7" r="2.2" fill="#1a8ad8"/></svg>
<svg class="a" style="left:520px;top:522.5px" width="14" height="14" viewBox="0 0 14 14"><path d="M11 3 A5 5 0 1 0 11 11" fill="none" stroke="#d8402a" stroke-width="3"/><ellipse cx="5" cy="11" rx="3.5" ry="1.8" fill="#e8c898"/></svg>
<svg class="a" style="left:542.5px;top:522.5px" width="13" height="14" viewBox="0 0 13 14"><path d="M4 4 V2.5 A2.5 2.5 0 0 1 9 2.5 V4" fill="none" stroke="#1c4f8c" stroke-width="1"/><rect x="1" y="4" width="11" height="9.5" rx="1" fill="#1c4f8c"/><rect x="4" y="6.5" width="2.2" height="2.2" fill="#f25022"/><rect x="6.8" y="6.5" width="2.2" height="2.2" fill="#7fba00"/><rect x="4" y="9.3" width="2.2" height="2.2" fill="#00a4ef"/><rect x="6.8" y="9.3" width="2.2" height="2.2" fill="#ffb900"/></svg>
<svg class="a" style="left:566px;top:523px" width="13" height="13" viewBox="0 0 13 13"><circle cx="6.5" cy="6.5" r="6.2" fill="#2aa3dd"/><path d="M3 6.3 L9.8 3.6 L8.7 9.7 L6.3 7.9 L5.3 9 L5.2 7.3 L8.7 4.6 L4.7 7 Z" fill="#fff"/></svg>
<svg class="a" style="left:589px;top:523px" width="13" height="14" viewBox="0 0 13 14"><path d="M6.5 1 C10 1 12 3 12 6.5 C12 10 10 11.5 6.5 11.5 L4.5 13.3 V11 C2 10 1 8.5 1 6.5 C1 3 3 1 6.5 1Z" fill="#7360f2"/><path d="M6.5 2.3 C9.3 2.3 10.7 3.8 10.7 6.5 C10.7 9.2 9.3 10.3 6.5 10.3 L5.5 11 V10 C3.3 9.5 2.3 8.3 2.3 6.5 C2.3 3.8 3.7 2.3 6.5 2.3Z" fill="#fdf0e6"/><path d="M4.3 4.3 C4.6 6.6 6 8 8.5 8.6 L8.9 7.6 L7.8 7 L7.2 7.5 C6.5 7.1 5.8 6.4 5.5 5.8 L6 5.2 L5.4 4.1 Z" fill="#7360f2"/></svg>
<div class="a" style="left:596.2px;top:520px;width:9px;height:8px;background:#e02a2a;border-radius:4px"></div>
<div class="t" style="left:596.2px;top:521px;width:9px;text-align:center;font-size:5.5px;line-height:6px;color:#fff">21</div>
<svg class="a" style="left:612px;top:523px" width="13" height="13" viewBox="0 0 13 13"><path d="M6.5 1 A5.5 5.5 0 1 1 3.6 11.2 L1 12 L1.9 9.5 A5.5 5.5 0 0 1 6.5 1Z" fill="#25c05a"/><path d="M4.4 4 C4.4 6.5 6.5 8.6 9 8.6 L9 7.5 L7.8 7 L7.2 7.6 C6.5 7.2 5.8 6.5 5.4 5.8 L6 5.2 L5.5 4 Z" fill="#fff"/></svg>
<div class="a" style="left:632px;top:520.5px;width:19px;height:17.5px;background:#fdf3ea;border-radius:3px"></div>
<svg class="a" style="left:634.5px;top:522px" width="14" height="14" viewBox="0 0 14 14"><ellipse cx="7" cy="7" rx="5.5" ry="6.2" fill="#e8162b"/><ellipse cx="7" cy="7" rx="2.3" ry="4.5" fill="#fdf3ea"/></svg>
<div class="a" style="left:637px;top:537px;width:8px;height:1.5px;background:#2a6fd6;border-radius:1px"></div>
<svg class="a" style="left:657.5px;top:522.5px" width="14" height="14" viewBox="0 0 14 14"><circle cx="7" cy="7" r="6.5" fill="#e33b2e"/><path d="M7 7 L1.4 10.2 A6.5 6.5 0 0 0 9 13.2 Z" fill="#2ea44f"/><path d="M7 7 L9 13.2 A6.5 6.5 0 0 0 12.6 3.8 Z" fill="#f6c026"/><circle cx="7" cy="7" r="3" fill="#fff"/><circle cx="7" cy="7" r="2.3" fill="#1a73e8"/></svg>
<svg class="a" style="left:681px;top:522.5px" width="14" height="14" viewBox="0 0 14 14"><circle cx="7" cy="7" r="6.5" fill="#2d6bea"/><text x="7" y="9" text-anchor="middle" font-family="Liberation Sans" font-size="6" font-weight="bold" fill="#fff">zm</text></svg>
<svg class="a" style="left:704px;top:523px" width="14" height="13" viewBox="0 0 14 13"><rect x="4" y="1" width="9.5" height="11" rx="1" fill="#2b7cd3"/><rect x="4" y="4" width="9.5" height="2.5" fill="#41a5ee"/><rect x="0.5" y="3" width="7" height="7" rx="1" fill="#185abd"/><text x="4" y="8.6" text-anchor="middle" font-family="Liberation Sans" font-size="5.5" font-weight="bold" fill="#fff">W</text></svg>
<svg class="a" style="left:727px;top:523px" width="13" height="13" viewBox="0 0 13 13"><path d="M6.5 1 A5.5 5.5 0 1 1 3.6 11.2 L1 12 L1.9 9.5 A5.5 5.5 0 0 1 6.5 1Z" fill="#25c05a"/><path d="M4.4 4 C4.4 6.5 6.5 8.6 9 8.6 L9 7.5 L7.8 7 L7.2 7.6 C6.5 7.2 5.8 6.5 5.4 5.8 L6 5.2 L5.5 4 Z" fill="#fff"/></svg>
<div class="a" style="left:594px;top:538px;width:3px;height:1.2px;background:#777"></div>
<div class="a" style="left:663px;top:538px;width:3px;height:1.2px;background:#777"></div>
<div class="a" style="left:686px;top:538px;width:3px;height:1.2px;background:#777"></div>
<div class="a" style="left:709px;top:538px;width:3px;height:1.2px;background:#777"></div>
<div class="a" style="left:732px;top:538px;width:3px;height:1.2px;background:#777"></div>
<!-- tray -->
<svg class="a" style="left:862px;top:527px" width="8" height="5" viewBox="0 0 8 5"><path d="M1 4 L4 1 L7 4" fill="none" stroke="#222" stroke-width="1"/></svg>
<svg class="a" style="left:878px;top:524px" width="10" height="11" viewBox="0 0 10 11"><ellipse cx="4.5" cy="2.5" rx="3.5" ry="1.5" fill="#bbb"/><path d="M1 2.5 V8.5 A3.5 1.5 0 0 0 8 8.5 V2.5" fill="#ccc"/><circle cx="6.8" cy="8.3" r="1.6" fill="#e02020"/></svg>
<svg class="a" style="left:893px;top:524px" width="14" height="11" viewBox="0 0 14 11" fill="none" stroke="#3a5ab0" stroke-width="1.1"><path d="M3 1 V5 M1.5 5.5 A1.5 1.5 0 0 0 4.5 5.5"/><path d="M7 7 L13 3.5 L11 10 Z" stroke-linejoin="round"/></svg>
<div class="t" style="left:914px;top:526px;font-size:6.2px;line-height:7px;color:#222">УКР</div>
<svg class="a" style="left:933.5px;top:524.5px" width="11" height="9" viewBox="0 0 11 9" fill="none" stroke="#333" stroke-width="0.9"><path d="M1 3.5 A6.5 6.5 0 0 1 10 3.5 M2.5 5 A4.5 4.5 0 0 1 8.5 5 M4 6.5 A2.2 2.2 0 0 1 7 6.5"/><circle cx="5.5" cy="7.8" r="0.6" fill="#333"/></svg>
<svg class="a" style="left:946px;top:524.5px" width="10" height="9" viewBox="0 0 10 9" fill="none" stroke="#333" stroke-width="0.9"><path d="M1 3 H3 L5.5 1 V8 L3 6 H1 Z" stroke-linejoin="round"/><path d="M7 3 A2 2 0 0 1 7 6 M8.3 2 A3.5 3.5 0 0 1 8.3 7"/></svg>
<div class="t" style="left:954px;top:521.5px;width:40px;text-align:right;font-size:6.3px;line-height:7px;color:#222">14:04</div>
<div class="t" style="left:944px;top:530px;width:50px;text-align:right;font-size:6.3px;line-height:7px;color:#222">11.01.2026</div>
</body></html>
